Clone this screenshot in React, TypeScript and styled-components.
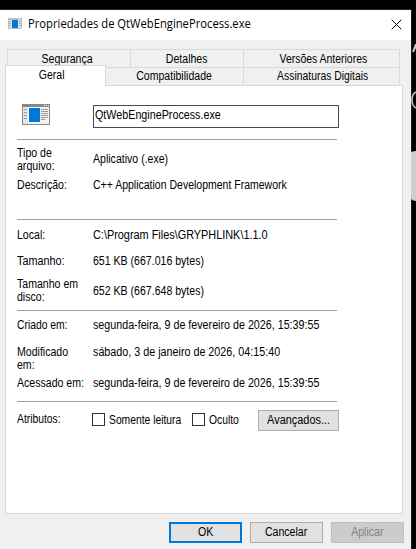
import React from "react";
import styled, { createGlobalStyle } from "styled-components";

const Global = createGlobalStyle`
  * { box-sizing: border-box; }
  body { margin: 0; background: #000; overflow: hidden; }
`;
const Desktop = styled.div`
  position: relative;
  width: 416px;
  height: 549px;
  padding-top: 9px;
  background: #000;
  overflow: hidden;
  font: 12px/13px "Liberation Sans", Arial, sans-serif;
  color: #000;
`;
const Backdrop = styled.svg`
  position: absolute;
  left: 411px;
  top: 0;
`;
const Dialog = styled.main`
  width: 412px;
  height: 540px;
  border-top: 1px solid #262626;
  border-right: 1px solid #1c1c1c;
  background: #f0f0f0;
`;
const TitleBar = styled.header`
  display: flex;
  align-items: center;
  height: 30px;
  padding: 0 9px 2px 8px;
  background: #fff;
`;
const Title = styled.h1`
  flex: 1;
  margin: 0 0 0 6px;
  font: 12px/16px "Open Sans", "Segoe UI", sans-serif;
  white-space: nowrap;
  transform: scaleX(0.936);
  transform-origin: left;
`;
const Tabs = styled.nav`
  display: flex;
  flex-direction: column;
  margin: 9px 11px 0 5px;
`;
const BackTabs = styled.div`
  display: grid;
  grid-template-columns: 123px 113px 1fr;
  height: 18px;
  margin-left: 2px;
  border: 1px solid #d9d9d9;
  border-width: 1px 1px 0;
`;
const FrontTabs = styled.div`
  display: grid;
  grid-template-columns: 101px 138px 1fr;
  height: 18px;
  border-right: 1px solid #d9d9d9;
`;
const Tab = styled.div<{ $last?: boolean; $front?: boolean; $left?: number; $right?: number }>`
  display: flex;
  justify-content: center;
  padding: ${p => (p.$front ? 2 : 3)}px ${p => p.$right ?? 0}px 0 ${p => p.$left ?? 0}px;
  border-right: ${p => (p.$last ? 0 : 1)}px solid #d9d9d9;
  border-top: ${p => (p.$front ? 1 : 0)}px solid #d9d9d9;
`;
const ActiveTab = styled(Tab)`
  height: 21px;
  margin-top: -2px;
  padding: 3px 7px 0 0;
  border: 1px solid #d9d9d9;
  border-bottom: 0;
  background: #fff;
  z-index: 1;
`;
const Text = styled.span<{ $fit?: number; $centered?: boolean }>`
  display: block;
  white-space: pre;
  transform: scaleX(${p => p.$fit ?? 0.88});
  transform-origin: ${p => (p.$centered ? "center" : "left")};
`;
const Panel = styled.section`
  width: 398px;
  height: 429px;
  margin-left: 5px;
  padding: 18px 62px 0 11px;
  border: 1px solid #d9d9d9;
  background: #fff;
`;
const FileHeader = styled.div`
  display: flex;
  align-items: flex-start;
  height: 35px;
  padding-left: 5px;
`;
const FileName = styled.div`
  flex: none;
  width: 246px;
  height: 23px;
  margin: 1px 0 0 43px;
  padding: 3px 1px;
  border: 1px solid #4a4a4a;
`;
const Group = styled.div<{ $h: number }>`
  height: ${p => p.$h}px;
  width: 320px;
  border-top: 1px solid #a0a0a0;
`;
const Row = styled.div<{ $h: number; $pad: number }>`
  display: grid;
  grid-template-columns: 76px 1fr;
  height: ${p => p.$h}px;
  padding-top: ${p => p.$pad}px;
`;
const Value = styled(Text)<{ $drop?: number }>`
  padding-top: ${p => p.$drop ?? 0}px;
`;
const Attributes = styled.div`
  display: flex;
  align-items: flex-start;
  width: 322px;
  padding-top: 8px;
`;
const AttrLabel = styled.div`
  width: 75px;
  padding-top: 3px;
`;
const Check = styled.label<{ $w: number }>`
  display: flex;
  gap: 4px;
  width: ${p => p.$w}px;
  padding-top: 3px;
`;
const Box = styled.span`
  flex: none;
  width: 13px;
  height: 13px;
  border: 1px solid #333;
  background: #fff;
`;
const CheckText = styled(Text)`
  flex: none;
  margin-top: 1px;
`;
const Button = styled.button<{ $kind?: "default" | "disabled"; $w?: number }>`
  display: flex;
  justify-content: center;
  align-items: center;
  flex: none;
  width: ${p => p.$w ?? 73}px;
  height: 21px;
  padding: 0;
  border: ${p => (p.$kind === "default" ? "2px solid #0078d7" : p.$kind === "disabled" ? "1px solid #bfbfbf" : "1px solid #adadad")};
  background: ${p => (p.$kind === "disabled" ? "#ccc" : "#e1e1e1")};
  color: ${p => (p.$kind === "disabled" ? "#838383" : "#000")};
  font: inherit;
`;
const Footer = styled.footer`
  display: flex;
  justify-content: flex-end;
  gap: 8px;
  padding: 8px 7px 0 0;
`;

const SmallAppIcon = () => (
  <svg width="14" height="12" viewBox="0 0 14 12" shapeRendering="crispEdges">
    <path fill="#b9bfc4" d="M0 0h14v11H0z" />
    <path fill="#e2e4e5" d="M1 2h12v8H1z" />
    <path fill="#0078d7" d="M4 2h6v8H4z" />
    <path fill="#aaa" d="M1 3h2v1H1zM1 5h2v1H1zM1 7h2v1H1zM11 3h2v1h-2zM11 5h2v1h-2zM11 7h2v1h-2z" />
    <path fill="#fff" d="M11 0h1v1h-1z" />
  </svg>
);
const LargeAppIcon = () => (
  <svg width="28" height="21" viewBox="0 0 28 21" shapeRendering="crispEdges">
    <path fill="#85898c" d="M0 0h28v21H0z" />
    <path fill="#f3f3f3" d="M1 3h26v17H1z" />
    <path fill="#e4e4e4" d="M1 3h5v17H1z" />
    <path fill="#fff" d="M22 1h1v1h-1zM24 1h1v1h-1zM26 1h1v1h-1zM6 3h1v17H6z" />
    <path fill="#0078d7" d="M7 4h11v14H7z" />
    <path fill="#979b9e" d="M2 5h3v1H2zM2 8h3v1H2zM2 11h3v1H2zM2 14h3v1H2zM19 5h7v1h-7zM19 7h7v1h-7zM19 9h7v1h-7zM19 11h7v1h-7zM19 13h7v1h-7zM19 15h4v1h-4z" />
  </svg>
);
const CloseIcon = () => (
  <svg width="11" height="11" viewBox="0 0 11 11">
    <path d="M.7.7l9.6 9.6M10.3.7L.7 10.3" stroke="#000" strokeWidth="1" />
  </svg>
);

export default function App() {
  return (
    <>
      <Global />
      <Desktop>
        <Dialog>
          <TitleBar>
            <SmallAppIcon />
            <Title>Propriedades de QtWebEngineProcess.exe</Title>
            <CloseIcon />
          </TitleBar>
          <Tabs>
            <BackTabs>
              <Tab $right={3}><Text $centered>Segurança</Text></Tab>
              <Tab $right={1}><Text $centered>Detalhes</Text></Tab>
              <Tab $last $left={3}><Text $centered $fit={0.87}>Versões Anteriores</Text></Tab>
            </BackTabs>
            <FrontTabs>
              <ActiveTab><Text $centered>Geral</Text></ActiveTab>
              <Tab $front $right={1}><Text $centered>Compatibilidade</Text></Tab>
              <Tab $front $last $left={3}><Text $centered $fit={0.865}>Assinaturas Digitais</Text></Tab>
            </FrontTabs>
          </Tabs>
          <Panel>
            <FileHeader>
              <LargeAppIcon />
              <FileName><Text $fit={0.895}>QtWebEngineProcess.exe</Text></FileName>
            </FileHeader>
            <Group $h={80}>
              <Row $h={39} $pad={7}>
                <Text>{"Tipo de\narquivo:"}</Text>
                <Value $drop={6}>Aplicativo (.exe)</Value>
              </Row>
              <Row $h={30} $pad={0}>
                <Text>Descrição:</Text>
                <Value $fit={0.875}>C++ Application Development Framework</Value>
              </Row>
            </Group>
            <Group $h={91}>
              <Row $h={35} $pad={9}>
                <Text>Local:</Text>
                <Value $fit={0.907}>{"C:\\Program Files\\GRYPHLINK\\1.1.0"}</Value>
              </Row>
              <Row $h={23} $pad={0}>
                <Text $fit={0.9}>Tamanho:</Text>
                <Value>651 KB (667.016 bytes)</Value>
              </Row>
              <Row $h={30} $pad={0}>
                <Text>{"Tamanho em\ndisco:"}</Text>
                <Value $drop={7}>652 KB (667.648 bytes)</Value>
              </Row>
            </Group>
            <Group $h={91}>
              <Row $h={35} $pad={8}>
                <Text $fit={0.86}>Criado em:</Text>
                <Value $fit={0.893}>segunda-feira, 9 de fevereiro de 2026, 15:39:55</Value>
              </Row>
              <Row $h={31} $pad={0}>
                <Text>{"Modificado\nem:"}</Text>
                <Value $fit={0.896}>sábado, 3 de janeiro de 2026, 04:15:40</Value>
              </Row>
              <Row $h={20} $pad={0}>
                <Text>Acessado em:</Text>
                <Value $fit={0.893}>segunda-feira, 9 de fevereiro de 2026, 15:39:55</Value>
              </Row>
            </Group>
            <Group $h={60}>
              <Attributes>
                <AttrLabel><Text $fit={0.86}>Atributos:</Text></AttrLabel>
                <Check $w={100}><Box /><CheckText $fit={0.86}>Somente leitura</CheckText></Check>
                <Check $w={66}><Box /><CheckText $fit={0.86}>Oculto</CheckText></Check>
                <Button $w={81}><Text $centered $fit={0.91}>Avançados...</Text></Button>
              </Attributes>
            </Group>
          </Panel>
          <Footer>
            <Button $kind="default"><Text $centered>OK</Text></Button>
            <Button><Text $centered>Cancelar</Text></Button>
            <Button $kind="disabled" disabled><Text $centered>Aplicar</Text></Button>
          </Footer>
        </Dialog>
        <Backdrop width="5" height="549" viewBox="0 0 5 549">
          <path d="M1 52L4 44h1v4l-2 4z" fill="#c8c8c8" />
          <path d="M5 92Q1 94 1 100T5 108" fill="none" stroke="#c8c8c8" strokeWidth="1.5" />
          <path d="M0 152q3-1 5-1v50q-3 0-5-2z" fill="#cdcfce" />
        </Backdrop>
      </Desktop>
    </>
  );
}
